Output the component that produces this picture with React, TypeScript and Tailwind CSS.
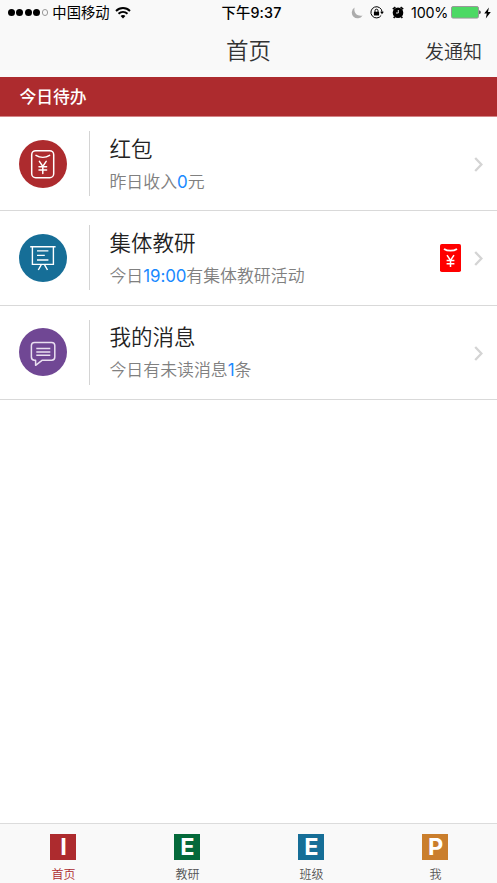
import type { ReactNode } from 'react';

interface TodoRowProps {
  icon: ReactNode;
  color: string;
  title: string;
  children: ReactNode;
  badge?: ReactNode;
}

interface TabProps {
  letter: string;
  label: string;
  color: string;
  active?: boolean;
}

function WifiIcon() {
  return (
    <svg width="16" height="12" viewBox="0 0 16 12" fill="none" stroke="#000" strokeWidth="1.9">
      <path d="M1 4C5 0 11 0 15 4" />
      <path d="M3.5 6.8c2.6-2.4 6.4-2.4 9 0" />
      <path d="M8 11.4 5.6 8.9c1.3-1.2 3.5-1.2 4.8 0z" fill="#000" stroke="none" />
    </svg>
  );
}

function MoonIcon() {
  return (
    <svg width="12" height="12" viewBox="0 0 12 12" fill="#acacac">
      <path d="M3.6.6A5.8 5.8 0 1 0 11.6 8.5C5.8 9.6 2.4 5.2 3.6.6z" />
    </svg>
  );
}

function RotationLockIcon() {
  return (
    <svg width="14" height="13" viewBox="0 0 14 13" fill="none" stroke="#000">
      <path d="M11.2 9.4A5.6 5.6 0 1 1 12.1 6" />
      <path d="M10.1 5.8h3.8L12 8.2z" fill="#000" stroke="none" />
      <rect x="3.9" y="5.7" width="5.2" height="3.9" rx=".4" fill="#000" stroke="none" />
      <path d="M5 6V4.7a1.5 1.5 0 0 1 3 0V6" />
    </svg>
  );
}

function AlarmIcon() {
  return (
    <svg width="12" height="13" viewBox="0 0 12 13">
      <circle cx="6" cy="6.8" r="5.3" fill="#000" />
      <path d="M.8 3.2 3.4 1.2M11.2 3.2 8.6 1.2M2.7 10.6 1.7 12M9.3 10.6l1 1.4" stroke="#000" strokeWidth="1.6" />
      <path d="M6.3 4v3H4" fill="none" stroke="#f9f9f9" strokeWidth=".9" />
    </svg>
  );
}

function BatteryIcon() {
  return (
    <svg width="30" height="13" viewBox="0 0 30 13">
      <rect x=".5" y=".5" width="27" height="11.6" rx="1.6" fill="#4cd964" stroke="#999" />
      <path d="M28.4 4.3c1.6.5 1.6 3.5 0 4z" fill="#000" />
    </svg>
  );
}

function BoltIcon() {
  return (
    <svg width="7" height="12" viewBox="0 0 7 12">
      <path d="M4.9.5.2 6.6h2.6L1.8 11.5 6.8 5H4z" fill="#000" />
    </svg>
  );
}

function RedPacketIcon() {
  return (
    <svg className="size-12" viewBox="0 0 48 48" fill="none" stroke="#fff" strokeWidth="1.5" strokeLinecap="round">
      <rect x="12.7" y="10.7" width="22" height="27" rx="4" />
      <path d="M17 15.3c4 2.5 9.6 2.5 13.6 0" />
      <path d="m20.4 21.3 3.4 5 3.4-5M23.8 26.5v6.9M20 26.7h7.6M20 30h7.6" strokeWidth="1.5" />
    </svg>
  );
}

function BoardIcon() {
  return (
    <svg className="size-12" viewBox="0 0 48 48" fill="none" stroke="#fff" strokeWidth="1.4">
      <path d="M11.2 12.8h25.4M13.4 12.8v17.6h21V12.8M18 16.9h11.4M18 21.4h7.8M18 26h11.4" />
      <path d="M22.2 30.8 19.3 36M25.6 30.8l2.9 5.2" />
    </svg>
  );
}

function MessageIcon() {
  return (
    <svg className="size-12" viewBox="0 0 48 48" fill="none" stroke="#e9dff0" strokeWidth="1.5" strokeLinejoin="round">
      <path d="M15.6 14.4h17a3.2 3.2 0 0 1 3.2 3.2v11.5a3.2 3.2 0 0 1-3.2 3.2H23l-6.4 5v-5h-1a3.2 3.2 0 0 1-3.2-3.2V17.6a3.2 3.2 0 0 1 3.2-3.2z" />
      <path d="M17.3 20.6h14M17.3 23.9h14M17.3 27.2h14" />
    </svg>
  );
}

function PacketBadge() {
  return (
    <svg width="21" height="28" viewBox="0 0 21 28" fill="none" stroke="#fff" strokeWidth="1.8">
      <rect width="21" height="28" rx="1.8" fill="#f00" stroke="none" />
      <path d="M4 4.9c3.5 2.4 9.5 2.4 13 0" />
      <path d="m7 11.2 3.5 5.2 3.5-5.2M10.5 16v7M6.6 16.6h7.8M6.6 19.7h7.8" strokeWidth="1.5" />
    </svg>
  );
}

function Chevron() {
  return (
    <svg className="relative top-px" width="9" height="15" viewBox="0 0 9 15" fill="none" stroke="#d4d4d4" strokeWidth="2.3">
      <path d="m1.2 1 6.2 6.5-6.2 6.5" />
    </svg>
  );
}

function StatusBar() {
  return (
    <div className="grid h-[25px] grid-cols-[1fr_auto_1fr] items-center pr-1.5 pl-2 text-[14.3px] leading-[25px] text-black">
      <div className="flex items-center">
        <div className="mr-1 flex gap-[1.6px]">
          {[1, 2, 3, 4].map((n) => (
            <span key={n} className="size-[6.8px] rounded-full bg-black" />
          ))}
          <span className="size-[6.8px] rounded-full border border-[#999]" />
        </div>
        <span className="mr-[5px]">中国移动</span>
        <WifiIcon />
      </div>
      <div className="pl-1 font-medium tracking-[0.15px]">下午9:37</div>
      <div className="flex items-center justify-end">
        <MoonIcon />
        <span className="ml-[7px]"><RotationLockIcon /></span>
        <span className="ml-2"><AlarmIcon /></span>
        <span className="mr-[3px] ml-[7px] tracking-[-0.25px]">100%</span>
        <BatteryIcon />
        <span className="ml-[3px]"><BoltIcon /></span>
      </div>
    </div>
  );
}

function TodoRow({ icon, color, title, children, badge }: TodoRowProps) {
  return (
    <div className="flex h-[94.3px] items-center border-b border-[#d9d9d9] pr-3.5 pl-[19.4px]">
      <div className={`size-12 shrink-0 rounded-full ${color}`}>{icon}</div>
      <div className="ml-[21.6px] h-[65px] w-px shrink-0 bg-[#d4d4d4]" />
      <div className="ml-[19.5px] flex-1 pt-1">
        <h2 className="text-[21.5px] leading-8 font-[350] text-[#222]">{title}</h2>
        <p className="text-[16.9px] leading-[34px] font-[350] text-[#808080]">{children}</p>
      </div>
      {badge && <div className="mr-[13px]">{badge}</div>}
      <Chevron />
    </div>
  );
}

function Tab({ letter, label, color, active }: TabProps) {
  return (
    <div className="flex flex-col items-center pt-[9.5px]">
      <div className={`flex size-[26px] items-center justify-center pl-px text-[23.5px] leading-none font-bold text-white ${color}`}>
        {letter}
      </div>
      <span className={`mt-[5px] pl-px text-[12px] leading-5 font-[350] ${active ? 'text-[#ad2b2e]' : 'text-[#555]'}`}>{label}</span>
    </div>
  );
}

export default function App() {
  return (
    <div className="flex h-[883px] w-[497px] flex-col overflow-hidden bg-white font-['Inter','Noto_Sans_CJK_SC',sans-serif]">
      <header className="h-[77px] bg-[#f9f9f9]">
        <StatusBar />
        <div className="grid h-[52px] grid-cols-[1fr_auto_1fr] items-center px-[15px] text-[#333]">
          <span />
          <h1 className="text-[22.5px] leading-[46px] font-[350]">首页</h1>
          <button className="pt-[3px] text-right text-[19px] leading-[49px] font-[350]">发通知</button>
        </div>
      </header>
      <div className="h-10 border-b border-[#d48587] bg-[#ad2b2e] pt-px pl-[19.5px] text-[16.8px] leading-[39px] font-medium text-white">
        今日待办
      </div>
      <main className="flex-1">
        <TodoRow icon={<RedPacketIcon />} color="bg-[#ad2b2e]" title="红包">
          昨日收入<span className="font-normal text-[#1989ff]">0</span>元
        </TodoRow>
        <TodoRow icon={<BoardIcon />} color="bg-[#166e97]" title="集体教研" badge={<PacketBadge />}>
          今日<span className="font-normal tracking-[-0.1px] text-[#1989ff]">19:00</span>有集体教研活动
        </TodoRow>
        <TodoRow icon={<MessageIcon />} color="bg-[#704794]" title="我的消息">
          今日有未读消息<span className="font-normal text-[#1989ff]">1</span>条
        </TodoRow>
      </main>
      <nav className="grid h-[60px] grid-cols-4 border-t border-[#dcdcdc] bg-[#f9f9f9] pl-px">
        <Tab letter="I" label="首页" color="bg-[#ad2b2e]" active />
        <Tab letter="E" label="教研" color="bg-[#04693a]" />
        <Tab letter="E" label="班级" color="bg-[#166e97]" />
        <Tab letter="P" label="我" color="bg-[#ca7e2c]" />
      </nav>
    </div>
  );
}
